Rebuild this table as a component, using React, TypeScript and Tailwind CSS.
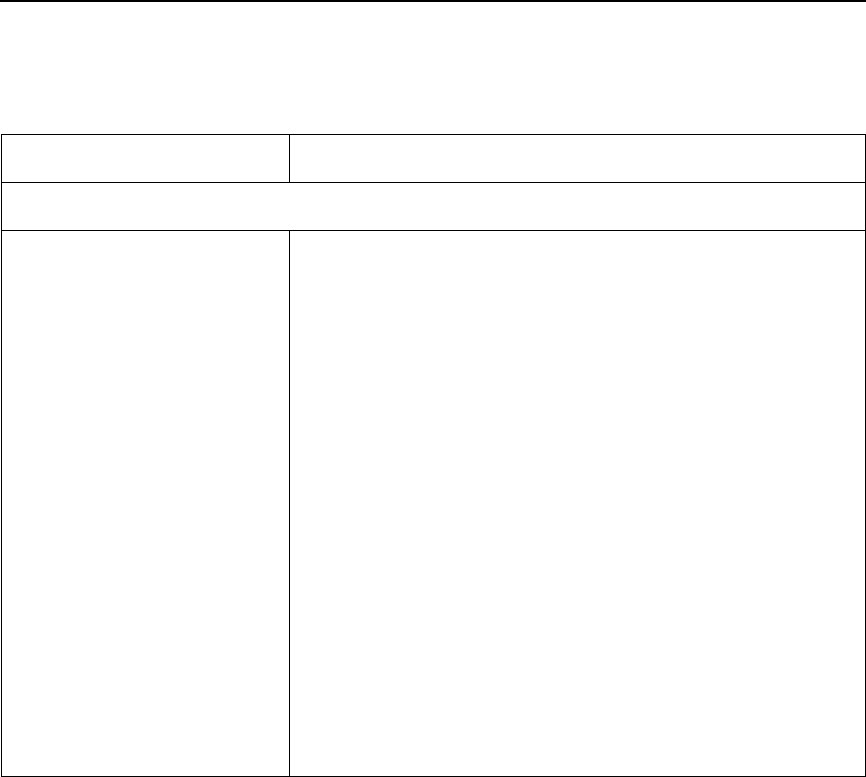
export default function App() {
  return (
    <div className="w-[866px] h-[777px] overflow-hidden bg-white font-['Liberation_Sans',sans-serif]">
      <div className="h-[2px] w-full bg-black" />
      <div className="mt-[132px] ml-px w-[865px] border border-black">
        <div className="flex h-[48px] border-b border-black">
          <div className="w-[288px] border-r border-black" />
          <div className="flex-1" />
        </div>
        <div className="h-[48px] border-b border-black" />
        <div className="flex h-[545px]">
          <div className="w-[288px] border-r border-black" />
          <div className="flex-1" />
        </div>
      </div>
    </div>
  );
}
